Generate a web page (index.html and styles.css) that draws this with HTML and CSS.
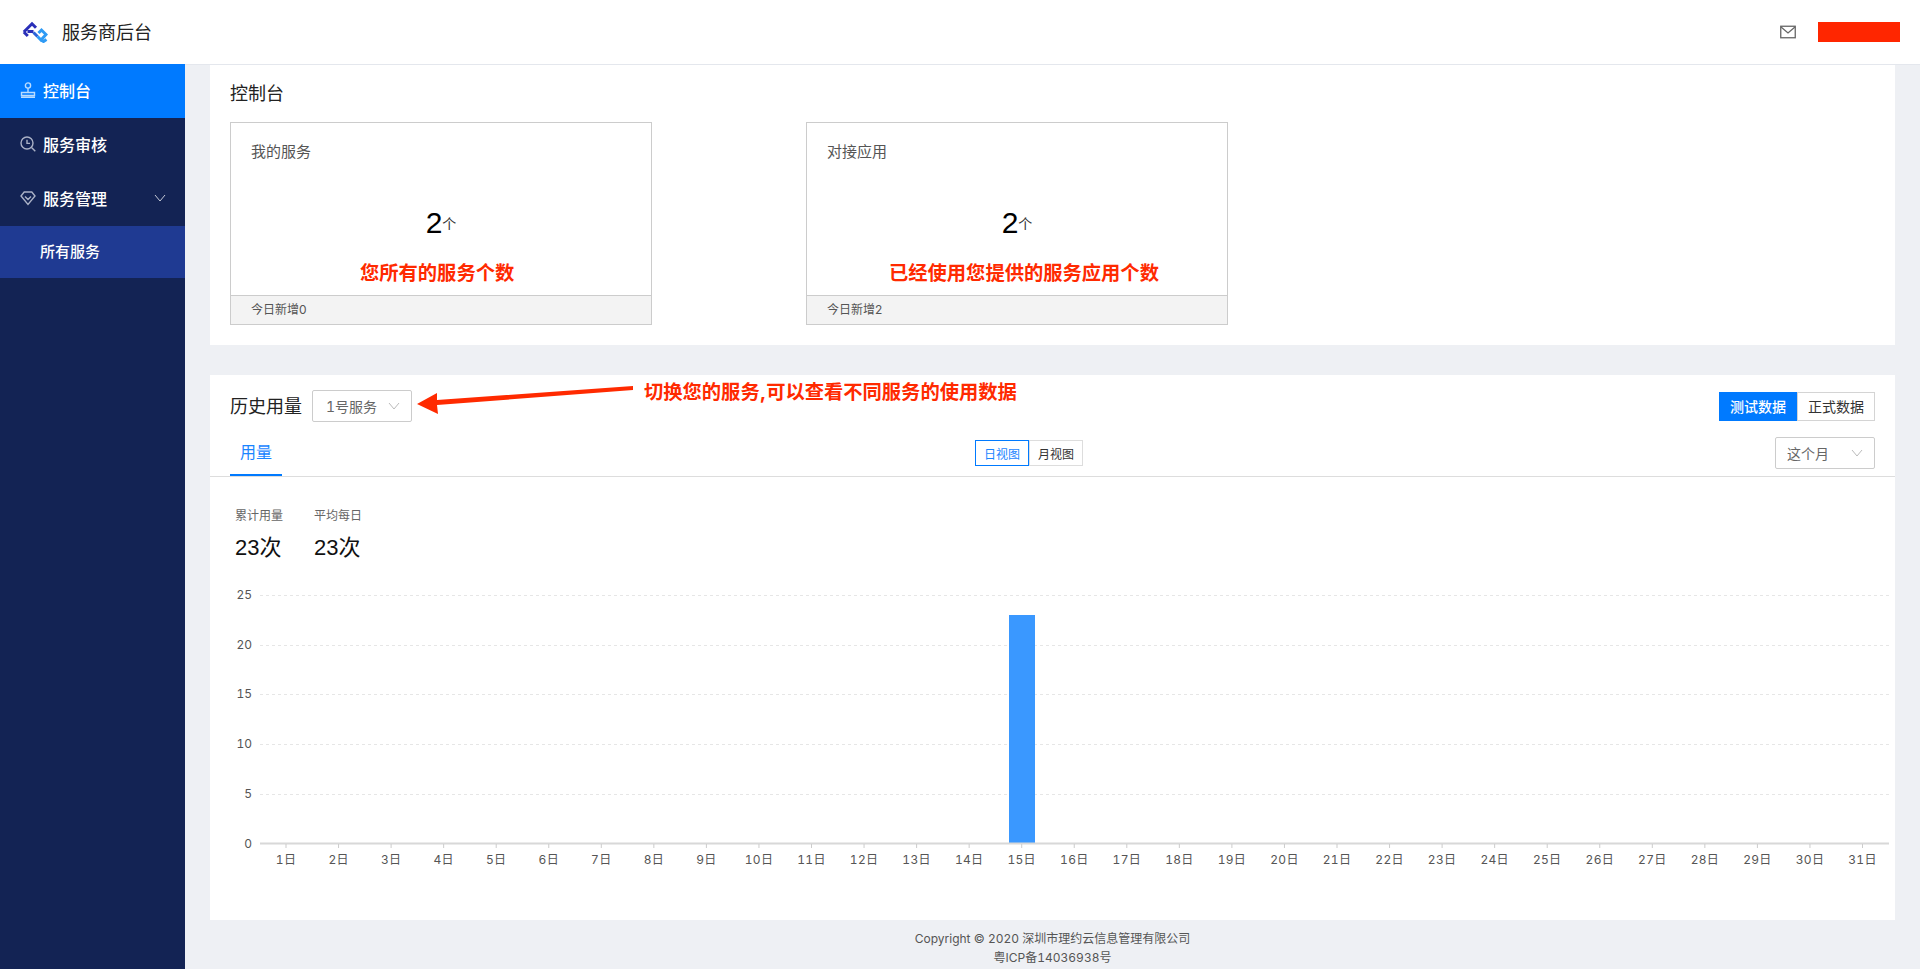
FILE: index.html
```html
<!DOCTYPE html>
<html lang="zh-CN">
<head>
    <meta charset="UTF-8">
    <title>服务商后台</title>
    <link rel="stylesheet" href="styles.css">
</head>
<body>
    <header class="topbar">
        <div class="brand">
            <svg class="logo" viewBox="0 0 26 22" width="26" height="22">
                <path class="logo-dark" d="M1.8 11 L10 2.8 L14 6.8 M1.8 11 L5.8 15 M5.5 10.5 H11.5"/>
                <path class="logo-mid" d="M11.5 11.5 L15.5 15.5"/>
                <path class="logo-light" d="M15.5 15.5 L19 19 L24 13.5 L19.5 9 L16.5 12 M19 18.5 L21.5 20.5 L24.5 18.5"/>
            </svg>
            <span class="brand-name">服务商后台</span>
        </div>
        <div class="topbar-right">
            <svg class="mail-icon" viewBox="0 0 16 14" width="16" height="14">
                <rect x="0.75" y="1.25" width="14.5" height="11.5"/>
                <path d="M1 2 L8 8 L15 2"/>
            </svg>
            <div class="user-mask"></div>
        </div>
    </header>

    <div class="layout">
        <nav class="sidebar">
            <a class="nav-item active">
                <svg class="nav-icon" viewBox="0 0 16 16" width="16" height="16">
                    <circle cx="8" cy="3.5" r="2.6"/>
                    <path d="M8 6.1 V10 M1.5 10.5 H14.5 V13.5 H1.5 Z M1 15.3 H15"/>
                </svg>
                <span>控制台</span>
            </a>
            <a class="nav-item">
                <svg class="nav-icon" viewBox="0 0 16 16" width="16" height="16">
                    <circle cx="7" cy="7" r="6"/>
                    <path d="M7 3.8 V7.4 H10 M11.5 11.5 L15.3 15.3"/>
                </svg>
                <span>服务审核</span>
            </a>
            <a class="nav-item">
                <svg class="nav-icon" viewBox="0 0 16 16" width="16" height="16">
                    <path d="M4.2 2 H11.8 L15 6 L8 14.5 L1 6 Z M5 6.5 L8 9.5 L11 6.5"/>
                </svg>
                <span>服务管理</span>
                <svg class="nav-arrow" viewBox="0 0 12 8" width="12" height="8">
                    <path d="M1 1 L6 7 L11 1"/>
                </svg>
            </a>
            <a class="nav-sub">所有服务</a>
        </nav>

        <main class="content">
            <section class="panel overview">
                <h2 class="panel-title">控制台</h2>
                <div class="cards">
                    <div class="card">
                        <div class="card-body">
                            <div class="card-label">我的服务</div>
                            <div class="card-num"><b>2</b>个</div>
                        </div>
                        <div class="card-foot">今日新增0</div>
                        <div class="note note-services">您所有的服务个数</div>
                    </div>
                    <div class="card">
                        <div class="card-body">
                            <div class="card-label">对接应用</div>
                            <div class="card-num"><b>2</b>个</div>
                        </div>
                        <div class="card-foot">今日新增2</div>
                        <div class="note note-apps">已经使用您提供的服务应用个数</div>
                    </div>
                </div>
            </section>

            <section class="panel history">
                <div class="history-head">
                    <h2 class="history-title">历史用量</h2>
                    <div class="select service-select">
                        <span>1号服务</span>
                        <svg class="select-arrow" viewBox="0 0 12 8" width="12" height="8"><path d="M1 1 L6 7 L11 1"/></svg>
                    </div>
                    <div class="env-switch">
                        <button class="env-btn on">测试数据</button>
                        <button class="env-btn">正式数据</button>
                    </div>
                </div>
                <div class="tabs">
                    <div class="tab">用量</div>
                    <div class="view-switch">
                        <button class="view-btn on">日视图</button>
                        <button class="view-btn">月视图</button>
                    </div>
                    <div class="select range-select">
                        <span>这个月</span>
                        <svg class="select-arrow" viewBox="0 0 12 8" width="12" height="8"><path d="M1 1 L6 7 L11 1"/></svg>
                    </div>
                </div>
                <div class="stats">
                    <div class="stat">
                        <div class="stat-label">累计用量</div>
                        <div class="stat-value">23次</div>
                    </div>
                    <div class="stat">
                        <div class="stat-label">平均每日</div>
                        <div class="stat-value">23次</div>
                    </div>
                </div>

                <svg class="chart" viewBox="210 580 1685 340" width="1685" height="340">
                    <g class="grid">
                        <line x1="260" x2="1889" y1="595.5" y2="595.5"/>
                        <line x1="260" x2="1889" y1="645.5" y2="645.5"/>
                        <line x1="260" x2="1889" y1="694.5" y2="694.5"/>
                        <line x1="260" x2="1889" y1="744.5" y2="744.5"/>
                        <line x1="260" x2="1889" y1="794.5" y2="794.5"/>
                    </g>
                    <g class="y-labels">
                        <text x="252" y="599">25</text>
                        <text x="252" y="649">20</text>
                        <text x="252" y="698">15</text>
                        <text x="252" y="748">10</text>
                        <text x="252" y="798">5</text>
                        <text x="252" y="848">0</text>
                    </g>
                    <rect class="bar" x="1009" y="615" width="26" height="228"/>
                    <line class="axis" x1="260" x2="1889" y1="843.5" y2="843.5"/>
                    <line class="ticks" x1="285.5" x2="1864" y1="846" y2="846"/>
                    <g class="x-labels">
                        <text x="286" y="864">1日</text>
                        <text x="338.6" y="864">2日</text>
                        <text x="391.1" y="864">3日</text>
                        <text x="443.7" y="864">4日</text>
                        <text x="496.2" y="864">5日</text>
                        <text x="548.8" y="864">6日</text>
                        <text x="601.3" y="864">7日</text>
                        <text x="653.9" y="864">8日</text>
                        <text x="706.4" y="864">9日</text>
                        <text x="759" y="864">10日</text>
                        <text x="811.5" y="864">11日</text>
                        <text x="864.1" y="864">12日</text>
                        <text x="916.6" y="864">13日</text>
                        <text x="969.2" y="864">14日</text>
                        <text x="1021.7" y="864">15日</text>
                        <text x="1074.3" y="864">16日</text>
                        <text x="1126.8" y="864">17日</text>
                        <text x="1179.4" y="864">18日</text>
                        <text x="1231.9" y="864">19日</text>
                        <text x="1284.5" y="864">20日</text>
                        <text x="1337" y="864">21日</text>
                        <text x="1389.6" y="864">22日</text>
                        <text x="1442.1" y="864">23日</text>
                        <text x="1494.7" y="864">24日</text>
                        <text x="1547.2" y="864">25日</text>
                        <text x="1599.8" y="864">26日</text>
                        <text x="1652.3" y="864">27日</text>
                        <text x="1704.9" y="864">28日</text>
                        <text x="1757.4" y="864">29日</text>
                        <text x="1810" y="864">30日</text>
                        <text x="1862.5" y="864">31日</text>
                    </g>
                </svg>

                <!-- annotation pasted over the panel -->
                <svg class="note-arrow" viewBox="0 0 220 30" width="220" height="30">
                    <path d="M0 18 L20 7 L20 14 L216 0 L216 4 L20 19 L21 28 Z"/>
                </svg>
                <div class="note note-switch">切换您的服务,可以查看不同服务的使用数据</div>
            </section>

            <footer class="footer">
                <div>Copyright © 2020 深圳市理约云信息管理有限公司</div>
                <div>粤ICP备14036938号</div>
            </footer>
        </main>
    </div>
</body>
</html>
```

FILE: styles.css
```css
* {
    box-sizing: border-box;
}
body {
    margin: 0;
    height: 969px;
    overflow: hidden;
    display: flex;
    flex-direction: column;
    font-family: Inter, "Noto Sans CJK SC", sans-serif;
    color: #333;
    background: #eef0f4;
}
h2 {
    margin: 0;
    font-weight: 400;
}

/* top bar */
.topbar {
    height: 64px;
    flex-shrink: 0;
    display: flex;
    justify-content: space-between;
    align-items: center;
    background: #fff;
}
.brand {
    display: flex;
    align-items: center;
    padding-left: 22px;
}
.logo path {
    fill: none;
    stroke-width: 3;
}
.logo-dark {
    stroke: #2a2fb8;
}
.logo-mid {
    stroke: #2a63d8;
}
.logo-light {
    stroke: #2f9bf5;
}
.brand-name {
    margin: 0 0 2px 14px;
    font-size: 18px;
    color: #222;
}
.topbar-right {
    display: flex;
    align-items: center;
    padding-right: 20px;
}
.mail-icon {
    margin-right: 22px;
}
.mail-icon rect,
.mail-icon path {
    fill: none;
    stroke: #666;
    stroke-width: 1.3;
}
.user-mask {
    width: 82px;
    height: 20px;
    background: #ff2600;
}

/* sidebar */
.layout {
    flex: 1;
    display: flex;
    min-height: 0;
}
.sidebar {
    width: 185px;
    flex-shrink: 0;
    background: #132354;
    color: #fff;
}
.nav-item {
    height: 54px;
    display: flex;
    align-items: center;
    padding: 0 0 2px 20px;
    font-size: 16px;
    font-weight: 500;
}
.nav-item.active {
    background: #007aff;
}
.nav-icon {
    margin-right: 7px;
    fill: none;
    stroke: #aab1c6;
    stroke-width: 1.4;
}
.active .nav-icon {
    stroke: #b9dcff;
}
.nav-arrow {
    margin-left: 47px;
    fill: none;
    stroke: #c5cad8;
    stroke-width: 1;
}
.nav-sub {
    display: block;
    height: 52px;
    line-height: 52px;
    padding-left: 40px;
    font-size: 15px;
    font-weight: 500;
    background: #1f3a92;
}

/* main */
.content {
    flex: 1;
    display: flex;
    flex-direction: column;
    padding: 0 25px;
    border-top: 1px solid #e4e7ed;
    min-width: 0;
}
.panel {
    background: #fff;
}
.overview {
    height: 280px;
    padding: 16px 20px 0;
    margin-bottom: 30px;
}
.panel-title {
    font-size: 18px;
    line-height: 26px;
    color: #222;
    margin-bottom: 15px;
}
.cards {
    display: flex;
    gap: 154px;
}
.card {
    position: relative;
    width: 422px;
    height: 203px;
    display: flex;
    flex-direction: column;
    border: 1px solid #ccc;
}
.card-body {
    flex: 1;
    padding: 18px 20px;
}
.card-label {
    font-size: 15px;
    line-height: 22px;
    color: #555;
}
.card-num {
    margin-top: 42px;
    display: flex;
    justify-content: center;
    align-items: center;
    font-size: 14px;
    color: #333;
}
.card-num b {
    font-family: "Liberation Sans", sans-serif;
    font-size: 30px;
    font-weight: 400;
    line-height: 36px;
    color: #000;
}
.card-foot {
    height: 29px;
    line-height: 28px;
    padding-left: 20px;
    font-size: 12px;
    color: #555;
    background: #f3f3f3;
    border-top: 1px solid #ccc;
}

/* red annotations on top of the page */
.note {
    position: absolute;
    font-size: 19.3px;
    font-weight: 700;
    line-height: 28px;
    white-space: nowrap;
    color: #ff2a00;
}
.note-services {
    left: 129px;
    top: 136px;
}
.note-apps {
    left: 82px;
    top: 136px;
}
.note-switch {
    left: 434px;
    top: 3px;
}
.note-arrow {
    position: absolute;
    left: 207px;
    top: 11px;
    fill: #ff2a00;
}

/* history */
.history {
    position: relative;
    height: 545px;
}
.history-head {
    display: flex;
    align-items: center;
    padding: 15px 20px 0;
}
.history-title {
    font-size: 18px;
    color: #222;
    margin: 0 10px 2px 0;
}
.select {
    height: 32px;
    display: flex;
    align-items: center;
    justify-content: space-between;
    padding: 0 11px 0 13px;
    font-size: 14px;
    font-variant-numeric: tabular-nums;
    color: #666;
    border: 1px solid #ccc;
    border-radius: 2px;
}
.service-select {
    width: 100px;
}
.select-arrow {
    fill: none;
    stroke: #bbb;
    stroke-width: 1;
}
.env-switch {
    display: flex;
    margin-left: auto;
}
.env-btn {
    width: 78px;
    height: 29px;
    padding: 0;
    font: inherit;
    font-size: 14px;
    color: #333;
    background: #fff;
    border: 1px solid #d4d4d4;
}
.env-btn.on {
    font-weight: 500;
    color: #fff;
    background: #007aff;
    border-color: #007aff;
}
.tabs {
    display: flex;
    align-items: center;
    height: 47px;
    margin-top: 8px;
    padding: 0 20px;
    border-bottom: 1px solid #ddd;
}
.tab {
    width: 52px;
    height: 46px;
    line-height: 45px;
    text-align: center;
    font-size: 16px;
    color: #1a85ff;
    border-bottom: 2px solid #007aff;
}
.view-switch {
    display: flex;
    margin-left: 693px;
}
.view-btn {
    width: 54px;
    height: 26px;
    padding: 0;
    font: inherit;
    font-size: 12px;
    color: #333;
    background: #fff;
    border: 1px solid #ddd;
}
.view-btn.on {
    color: #1a85ff;
    border-color: #007aff;
}
.range-select {
    width: 100px;
    margin-left: auto;
    padding-left: 11px;
}
.stats {
    display: flex;
    gap: 31px;
    padding: 30px 25px 0;
}
.stat-label {
    font-size: 12px;
    line-height: 18px;
    color: #666;
}
.stat-value {
    margin-top: 8px;
    font-family: "Liberation Sans", "Noto Sans CJK SC", sans-serif;
    font-size: 22px;
    line-height: 30px;
    color: #111;
}

/* chart */
.chart {
    display: block;
    margin-top: 17px;
}
.grid line {
    stroke: #e6e6e6;
    stroke-dasharray: 3 3;
}
.y-labels text {
    font-size: 12px;
    font-variant-numeric: tabular-nums;
    fill: #555;
    text-anchor: end;
}
.x-labels text {
    font-size: 12px;
    font-variant-numeric: tabular-nums;
    letter-spacing: 0.3px;
    fill: #555;
    text-anchor: middle;
}
.bar {
    fill: #3a98ff;
}
.axis {
    stroke: #d8d8d8;
    stroke-width: 2;
}
.ticks {
    stroke: #ccc;
    stroke-width: 4;
    stroke-dasharray: 1 51.55;
}

.footer {
    flex: 1;
    padding-top: 9px;
    text-align: center;
    font-size: 12px;
    font-variant-numeric: tabular-nums;
    line-height: 19px;
    color: #555;
}
```
